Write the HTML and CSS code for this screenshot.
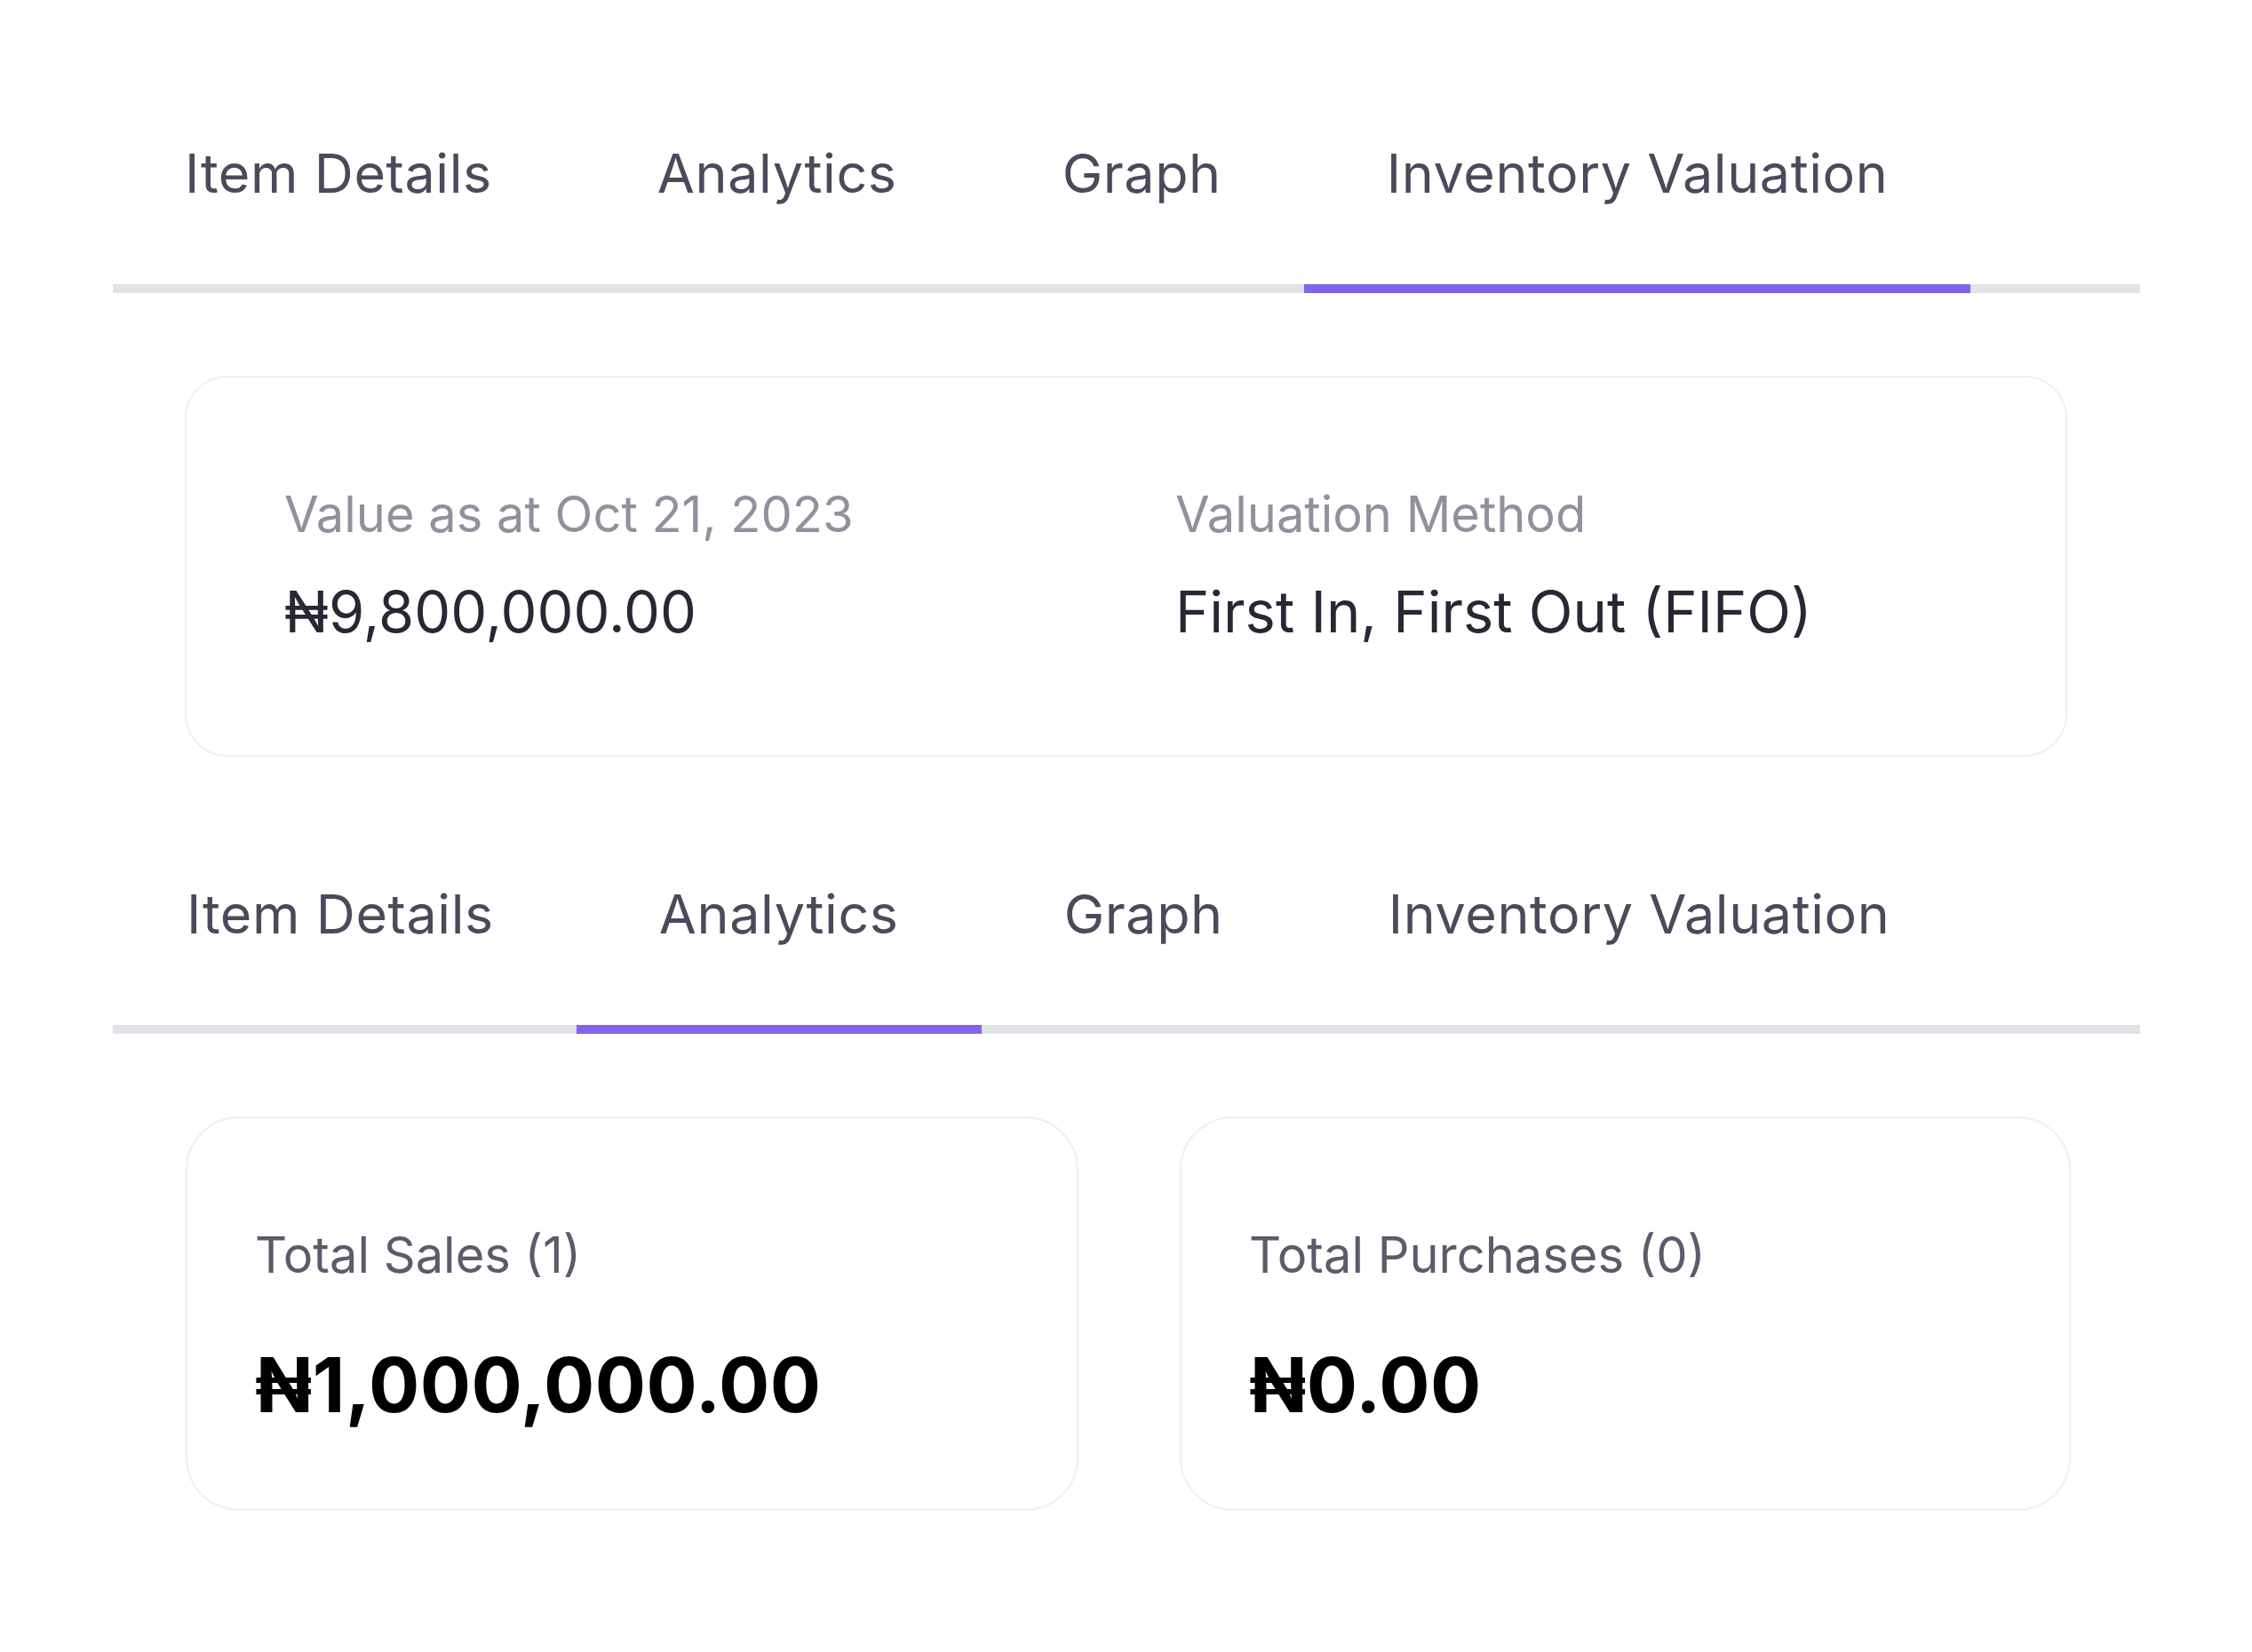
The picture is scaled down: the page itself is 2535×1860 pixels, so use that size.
FILE: index.html
```html
<!DOCTYPE html>
<html lang="en">
<head>
<meta charset="utf-8">
<title>Inventory item</title>
<link rel="stylesheet" href="styles.css">
</head>
<body>
<main class="page">
  <section class="panel">
    <nav class="tabs">
      <div class="tab">Item Details</div>
      <div class="tab">Analytics</div>
      <div class="tab">Graph</div>
      <div class="tab active">Inventory Valuation</div>
    </nav>
    <div class="card valuation">
      <div class="field">
        <div class="label">Value as at Oct 21, 2023</div>
        <div class="value">₦9,800,000.00</div>
      </div>
      <div class="field">
        <div class="label">Valuation Method</div>
        <div class="value">First In, First Out (FIFO)</div>
      </div>
    </div>
  </section>

  <section class="panel second">
    <nav class="tabs">
      <div class="tab">Item Details</div>
      <div class="tab active">Analytics</div>
      <div class="tab">Graph</div>
      <div class="tab">Inventory Valuation</div>
    </nav>
    <div class="stats">
      <div class="card stat">
        <div class="stat-label">Total Sales (1)</div>
        <div class="stat-value">₦1,000,000.00</div>
      </div>
      <div class="card stat">
        <div class="stat-label">Total Purchases (0)</div>
        <div class="stat-value">₦0.00</div>
      </div>
    </div>
  </section>
</main>
</body>
</html>
```
FILE: styles.css
```css
* { box-sizing: border-box; }

html, body {
  margin: 0;
  padding: 0;
  background: #ffffff;
}

body {
  font-family: "Inter", "Noto Sans", sans-serif;
  color: #2a2a38;
}

.page {
  padding: 165px 0 0 127px;
}

.panel {
  width: 2282px;
}

.tabs {
  display: flex;
  border-bottom: 10px solid #e0e3e7;
}

.tab {
  font-size: 61px;
  line-height: 1;
  letter-spacing: 0.6px;
  color: #4a4a5c;
  padding: 0 93px 94px;
  margin-bottom: -10px;
  border-bottom: 10px solid transparent;
  white-space: nowrap;
}

.tab:first-child {
  padding-left: 81px;
}

.tab.active {
  border-bottom-color: #8264e9;
}

.card {
  border: 2px solid #efeff3;
  background: #ffffff;
}

.valuation {
  margin: 93px 82px 0 81px;
  height: 429px;
  border-radius: 48px;
  padding: 126px 110px 0;
  display: grid;
  grid-template-columns: 1003px 1fr;
}

.label {
  font-size: 56px;
  line-height: 1;
  color: #91919d;
}

.value {
  margin-top: 49px;
  font-size: 65px;
  line-height: 1;
  color: #272735;
}

.second {
  margin-top: 147px;
}

.second .tab:first-child {
  padding-left: 83px;
}

.stats {
  margin: 93px 78px 0 82px;
  display: grid;
  grid-template-columns: 1005px 1fr;
  column-gap: 114px;
}

.stat {
  height: 444px;
  border-radius: 60px;
  padding: 126px 76px 0;
}

.stat-label {
  font-size: 56px;
  line-height: 1;
  color: #5b5b6b;
}

.stat-value {
  margin-top: 76px;
  font-size: 85px;
  line-height: 1;
  font-weight: 700;
  color: #000000;
  letter-spacing: 0.4px;
}
```
